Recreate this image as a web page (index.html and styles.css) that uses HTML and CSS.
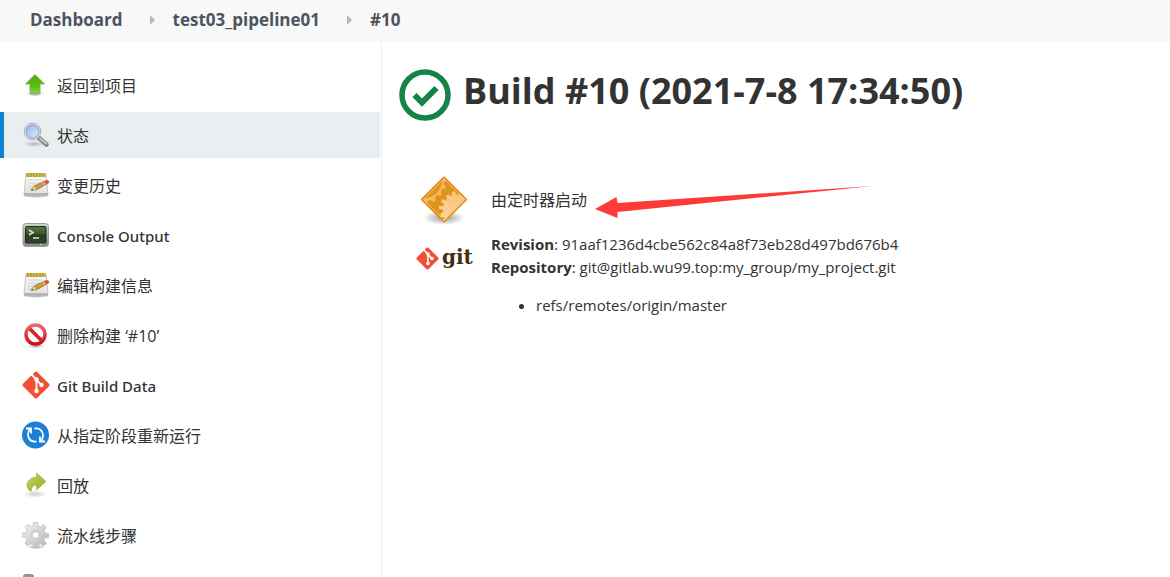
FILE: index.html
```html
<!DOCTYPE html>
<html lang="zh-CN">
<head>
<meta charset="utf-8">
<title>test03_pipeline01 #10</title>
<link rel="stylesheet" href="styles.css">
</head>
<body>
<svg class="defs" width="0" height="0" aria-hidden="true">
  <defs>
    <linearGradient id="green" x1="0" y1="0" x2="0" y2="1"><stop offset="0" stop-color="#4fae0c"/><stop offset=".6" stop-color="#55bd10"/><stop offset="1" stop-color="#8bdc3c"/></linearGradient>
    <radialGradient id="shade"><stop offset="0" stop-color="#000" stop-opacity=".4"/><stop offset="1" stop-color="#000" stop-opacity="0"/></radialGradient>
    <linearGradient id="lens" x1="0" y1="0" x2="1" y2="1"><stop offset="0" stop-color="#8db4e6"/><stop offset="1" stop-color="#e2edfb"/></linearGradient>
    <linearGradient id="paper" x1="0" y1="0" x2="0" y2="1"><stop offset="0" stop-color="#fff"/><stop offset="1" stop-color="#dedede"/></linearGradient>
    <linearGradient id="case" x1="0" y1="0" x2="0" y2="1"><stop offset="0" stop-color="#d2d4d0"/><stop offset="1" stop-color="#858883"/></linearGradient>
    <linearGradient id="screen" x1="0" y1="0" x2="0" y2="1"><stop offset="0" stop-color="#587247"/><stop offset=".45" stop-color="#3d5730"/><stop offset=".5" stop-color="#263d22"/><stop offset="1" stop-color="#2d4525"/></linearGradient>
    <linearGradient id="red" x1="0" y1="0" x2="0" y2="1"><stop offset="0" stop-color="#e9696a"/><stop offset="1" stop-color="#cf1015"/></linearGradient>
    <linearGradient id="olive" x1="0" y1="0" x2="1" y2="1"><stop offset="0" stop-color="#c4d65e"/><stop offset="1" stop-color="#8fae1b"/></linearGradient>
    <linearGradient id="steel" x1="0" y1="0" x2="1" y2="1"><stop offset="0" stop-color="#f4f4f4"/><stop offset="1" stop-color="#b5b5b5"/></linearGradient>
    <linearGradient id="cream" x1="0" y1="0" x2="0" y2="1"><stop offset="0" stop-color="#f8c272"/><stop offset="1" stop-color="#fddba8"/></linearGradient>
    <clipPath id="diamond"><path d="M24 1L46.500 23.500 24 46 1.500 23.500z"/></clipPath>
    <symbol id="notepad" viewBox="0 0 28 28">
      <ellipse cx="14" cy="25" rx="13" ry="2" fill="url(#shade)"/>
      <path d="M4 3h20l2 20q0 2-2 2H4q-2 0-2-2z" fill="url(#paper)" stroke="#c6c6c2"/>
      <path d="M2 22h24v2q-1 1-2 1H4q-2 0-2-1z" fill="#b4b4b1"/>
      <path d="M4 2h20v4H4z" fill="#d0bd55"/>
      <path d="M6 2v4M9 2v4M12 2v4M15 2v4M18 2v4M21 2v4" stroke="#998820"/>
      <path d="M6 9h15M6 12h12M6 15h7M6 18h6" stroke="#d2d2d2"/>
      <path d="M9 19l3-4 11-5 2 3-11 6z" fill="#d29b3e" stroke="#916324" stroke-width=".7"/>
      <path d="M12 15l2 4-5 1z" fill="#ead5ac"/><path d="M9 20l2-2 1 1z" fill="#333"/>
      <path d="M22 10l3-1q3 1 2 3l-2 1z" fill="#df4843"/><path d="M21 11l2 3" stroke="#a9b5bd" stroke-width="1.4"/>
    </symbol>
    <symbol id="gitmark" viewBox="0 0 28 28">
      <path d="M12.8 1q1.2-1 2.4 0L27 12.800q1 1.200 0 2.400L15.200 27q-1.200 1-2.400 0L1 15.200q-1-1.200 0-2.400z" fill="#f05033"/>
      <path d="M9.500 3.500l5 5V20M14.500 9l5 5" stroke="#fff" stroke-width="1.800" fill="none"/>
      <circle cx="14.500" cy="8.500" r="2.200" fill="#fff"/><circle cx="14.500" cy="20" r="2.200" fill="#fff"/><circle cx="19.500" cy="14" r="2.200" fill="#fff"/>
    </symbol>
  </defs>
</svg>

<nav class="breadcrumbs">
  <a href="#">Dashboard</a>
  <svg class="chevron" viewBox="0 0 5 10"><path d="M0 0l5 5-5 5z"/></svg>
  <a href="#">test03_pipeline01</a>
  <svg class="chevron" viewBox="0 0 5 10"><path d="M0 0l5 5-5 5z"/></svg>
  <a href="#">#10</a>
</nav>

<div class="page">
  <nav class="tasks">
    <a class="task" href="#">
      <svg class="icon" viewBox="0 0 28 28"><ellipse cx="13" cy="23" rx="8" ry="2.500" fill="url(#shade)"/><path d="M13 3.500L22.500 13H18v9.500H8V13H3.500z" fill="url(#green)" stroke="#7fb35f" stroke-linejoin="round"/></svg>
      <span>返回到项目</span></a>
    <a class="task current" href="#">
      <svg class="icon" viewBox="0 0 28 28"><ellipse cx="12" cy="23" rx="11" ry="3" fill="url(#shade)" opacity=".6"/><path d="M17 17l7.500 6.500" stroke="#858585" stroke-width="4.500" stroke-linecap="round"/><path d="M18 17.500l6 5" stroke="#c5c5c5" stroke-width="2" stroke-linecap="round"/><circle cx="10.500" cy="10.500" r="8.300" fill="#eee" stroke="#a8a8a8"/><circle cx="10.500" cy="10.500" r="6.500" fill="url(#lens)" stroke="#7398cc"/></svg>
      <span>状态</span></a>
    <a class="task" href="#"><svg class="icon"><use href="#notepad"/></svg><span>变更历史</span></a>
    <a class="task latin" href="#">
      <svg class="icon" viewBox="0 0 28 28"><rect x="1" y="2.500" width="25.500" height="23" rx="3" fill="url(#case)" stroke="#9b9e99"/><rect x="3.500" y="5.500" width="20.500" height="16.500" rx="1" fill="url(#screen)" stroke="#20291c"/><path d="M7 9l4 2.500L7 14" stroke="#dce5d8" stroke-width="1.500" fill="none"/><path d="M11 17h6" stroke="#dce5d8" stroke-width="1.500"/><path d="M18 23.500h2" stroke="#9ce43d" stroke-width="1.500"/></svg>
      <span>Console Output</span></a>
    <a class="task" href="#"><svg class="icon"><use href="#notepad"/></svg><span>编辑构建信息</span></a>
    <a class="task" href="#">
      <svg class="icon" viewBox="0 0 28 28"><ellipse cx="14" cy="25" rx="9" ry="2" fill="url(#shade)"/><path d="M7 7l13 13" stroke="#d92327" stroke-width="3.500"/><circle cx="13.500" cy="13.500" r="9.500" fill="none" stroke="url(#red)" stroke-width="3.500"/></svg>
      <span>删除构建 ‘#10’</span></a>
    <a class="task latin" href="#"><svg class="icon"><use href="#gitmark"/></svg><span>Git Build Data</span></a>
    <a class="task" href="#">
      <svg class="icon" viewBox="0 0 28 28"><circle cx="13.500" cy="14" r="13.500" fill="#1d7fd3"/><g fill="none" stroke="#fff" stroke-width="1.800"><path d="M12.500 7.500q7-1 8.500 6 .5 3-2 6.500M23 20.500h-5V15.500M14.500 20.500q-7 1-8.500-6-.5-3 2-6.500M4 7.500h5v5"/></g></svg>
      <span>从指定阶段重新运行</span></a>
    <a class="task" href="#">
      <svg class="icon" viewBox="0 0 28 28"><ellipse cx="13" cy="23" rx="12" ry="4" fill="url(#shade)" opacity=".5"/><path d="M14.500 2L24 10.500 14.500 19v-5q-5 0-5.500 6.500-5-3-4-7.500Q7 6.500 14.500 6z" fill="url(#olive)" stroke="#a6b94a" stroke-width=".8" stroke-linejoin="round"/></svg>
      <span>回放</span></a>
    <a class="task" href="#">
      <svg class="icon" viewBox="0 0 28 28"><ellipse cx="14" cy="26" rx="9" ry="2" fill="url(#shade)"/><path d="M11.500 1.500h4L16 5l2.500 1L21.500 3.500 24 6.500 22 9.500l1 2.500 3.500.5v4L23 17l-1 2.500 2.500 3-3 2.500-3-2L16 24l-.5 3h-4L11 24l-2.500-1-3 2L3 22l2-3-1-2.500-3.500-.5v-4L4 11.500 5 9 3 6l3-2.500 3 2L11 5z" fill="url(#steel)" stroke="#c0c0c0" stroke-width=".8" stroke-linejoin="round"/><circle cx="13.500" cy="14" r="5" fill="#d0d0d0"/><circle cx="13.500" cy="14" r="3.300" fill="#fff" stroke="#bbb" stroke-width=".6"/></svg>
      <span>流水线步骤</span></a>
    <a class="task" href="#">
      <svg class="icon" viewBox="0 0 28 28"><path d="M1.500 26V5.500q0-2 2-2h6q2 0 2 2v2h13V26z" fill="#999" stroke="#888"/></svg></a>
  </nav>

  <main class="content">
    <h1 class="title">
      <svg class="status" viewBox="0 0 52 52"><circle cx="26" cy="26" r="23" fill="none" stroke="#138347" stroke-width="5.500"/><path d="M15.500 26l7.500 7.500L37.500 19" fill="none" stroke="#138347" stroke-width="6"/></svg>
      <span>Build #10 (2021-7-8 17:34:50)</span>
    </h1>

    <section class="summary">
      <svg class="cause-icon" viewBox="0 0 48 50">
        <ellipse cx="24" cy="42" rx="21" ry="7" fill="url(#shade)"/>
        <g clip-path="url(#diamond)">
          <path d="M0 0h48v48H0z" fill="#e3911d"/>
          <path d="M26 0v5l-2 1v3l2 1-1 3-3 0-1 3 1 2-2 2-3-1-2 2 1 3-3 2-2-2-3 1-1 3-9 2V0z" fill="#f3b95f"/>
          <circle cx="3" cy="3" r="19.500" fill="#e3931f"/>
          <path d="M48 20l-3-1-2 1-1-3-3 0-1 2-2-1-1-3-3 1 0 3-2 1-2-2-2 2 1 3-2 1-3-1-1 3 3 2-1 2-4 0 0 3 4 1 0 2-3 2 1 3 3 0 0 2-2 2 2 3 1 4h26z" fill="url(#cream)"/>
        </g>
        <path d="M24 1L46.500 23.500 24 46 1.500 23.500z" fill="none" stroke="#e68a17" stroke-width="1.500" stroke-linejoin="round"/>
        <path d="M24 3L44.500 23.500 24 44 3.500 23.500z" fill="none" stroke="#f9c983" stroke-width=".7"/>
      </svg>
      <p class="cause">由定时器启动</p>

      <div class="git-logo"><svg class="git-logo-mark"><use href="#gitmark"/></svg><span>git</span></div>
      <div class="revision">
        <p><b>Revision</b>: 91aaf1236d4cbe562c84a8f73eb28d497bd676b4</p>
        <p><b>Repository</b>: git@gitlab.wu99.top:my_group/my_project.git</p>
        <ul><li>refs/remotes/origin/master</li></ul>
      </div>
      <svg class="pointer" viewBox="0 0 278 34"><path d="M0 23L21.500 11l1 6L278 0 22.500 26l0 6z" fill="#fc3a38"/></svg>
    </section>
  </main>
</div>
</body>
</html>
```
FILE: styles.css
```css
* { box-sizing: border-box; }

body {
  display: flex;
  flex-direction: column;
  height: 100vh;
  margin: 0;
  overflow: hidden;
  background: #fff;
  color: #333;
  font: 15px/23px "Open Sans", "Noto Sans CJK SC", sans-serif;
}

a { color: inherit; text-decoration: none; }
p { margin: 0; }
.defs { position: absolute; }

.breadcrumbs {
  display: flex;
  flex: none;
  align-items: center;
  height: 42px;
  padding: 0 30px 3px;
  background: #f8f8f8;
  color: #4d545d;
  font-size: 17px;
  font-weight: 700;
}
.chevron {
  width: 5px;
  height: 10px;
  margin: 0 18px 0 27px;
  fill: #b8b8b8;
}

.page { display: flex; flex: 1; min-height: 0; }

.tasks {
  flex: none;
  width: 382px;
  padding: 20px 1px 0 0;
  overflow: hidden;
  border-right: 1px solid #eaeff2;
}
.task {
  display: flex;
  align-items: center;
  gap: 7px;
  height: 46px;
  margin-bottom: 4px;
  padding-left: 18px;
  border-left: 4px solid transparent;
  font-size: 16px;
}
.task span { padding-top: 2px; }
.latin { font-family: "Noto Sans", sans-serif; font-size: 15px; font-weight: 500; }
.current { border-color: #0b83d1; background: #e9eef1; }
.icon { flex: none; width: 28px; height: 28px; }

.content { flex: 1; min-width: 0; padding: 26px 17px 0; }
.title {
  display: flex;
  align-items: center;
  gap: 12px;
  margin: 0;
  font-size: 36px;
  font-weight: 700;
  line-height: 46px;
}
.title span { padding-bottom: 8px; }
.status { flex: none; width: 52px; height: 52px; }

.summary {
  position: relative;
  display: grid;
  grid-template-columns: 56px 1fr;
  column-gap: 19px;
  margin: 52px 0 0 17px;
}
.cause-icon { width: 48px; height: 50px; margin: 2px 0 0 4px; }
.cause { padding-top: 15px; font-size: 16px; }
.revision { padding-top: 7px; }
.git-logo {
  display: flex;
  align-items: flex-start;
  gap: 3px;
  padding-top: 18px;
  color: #413010;
  font: 700 20px/27px "DejaVu Serif", serif;
}
.git-logo-mark { flex: none; width: 23px; height: 23px; margin-top: 3px; }
ul { margin: 15px 0 0; padding-left: 45px; }
.pointer {
  position: absolute;
  top: 12px;
  left: 179px;
  width: 278px;
  height: 34px;
}
```
